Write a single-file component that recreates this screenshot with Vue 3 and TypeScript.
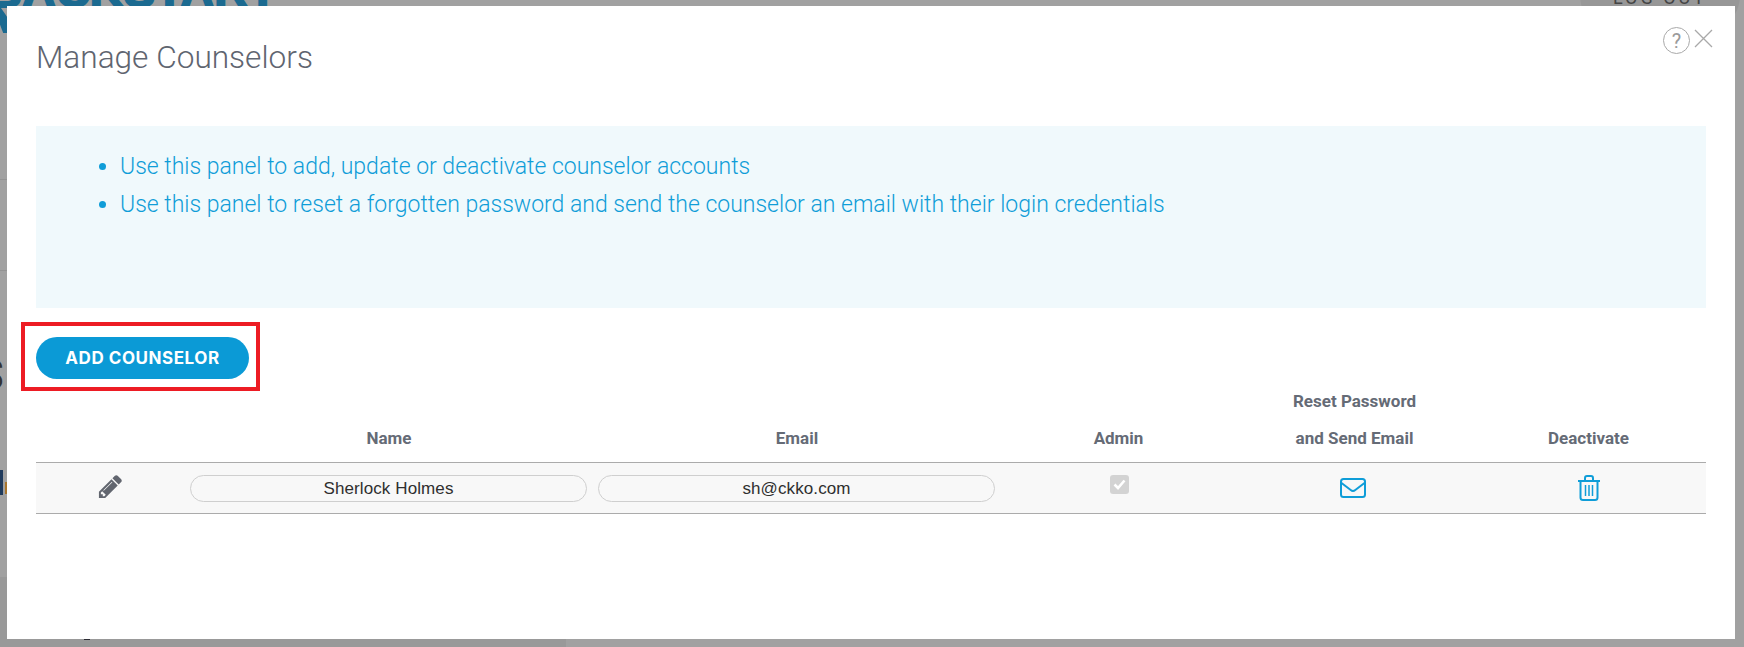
<script setup lang="ts">
interface Counselor {
  name: string;
  email: string;
}

const hints = [
  'Use this panel to add, update or deactivate counselor accounts',
  'Use this panel to reset a forgotten password and send the counselor an email with their login credentials',
];

const counselors: Counselor[] = [{ name: 'Sherlock Holmes', email: 'sh@ckko.com' }];
</script>

<template>
  <div class="page">
    <div class="backdrop">
      <div class="band" />
      <span class="logo">BACKSTART</span>
      <div class="logo-mark" />
      <div class="logout"><span>LOG OUT</span></div>
      <div class="rule rule-a" />
      <div class="rule rule-b" />
      <span class="stray-s">S</span>
      <span class="stray-bar" />
      <span class="stray-fleck" />
      <span class="stray-foot" />
    </div>

    <div class="modal">
      <header class="modal-head">
        <h1>Manage Counselors</h1>
        <div class="head-actions">
          <span class="help">?</span>
          <svg class="close" width="19" height="19" viewBox="0 0 19 19" fill="none" stroke="#a9a9a9" stroke-width="1.3">
            <path d="M1 1l17 17M18 1L1 18" />
          </svg>
        </div>
      </header>

      <section class="info">
        <ul>
          <li v-for="hint in hints" :key="hint">{{ hint }}</li>
        </ul>
      </section>

      <div class="actions">
        <button class="add-btn" type="button">ADD COUNSELOR</button>
      </div>

      <div class="table">
        <div class="row head">
          <div />
          <div>Name</div>
          <div>Email</div>
          <div>Admin</div>
          <div>Reset Password<br />and Send Email</div>
          <div>Deactivate</div>
        </div>
        <div v-for="c in counselors" :key="c.email" class="row body">
          <div class="cell">
            <svg class="pencil" width="27" height="27" viewBox="0 0 1792 1792" fill="#62666f">
              <path d="M491 1536l91-91-235-235-91 91v107h128v128h107zm523-928q0-22-22-22-10 0-17 7l-542 542q-7 7-7 17 0 22 22 22 10 0 17-7l542-542q7-7 7-17zm-54-192l416 416-832 832h-416v-416zm683 96q0 53-37 90l-166 166-416-416 166-165q36-38 90-38 53 0 91 38l235 234q37 39 37 91z" />
            </svg>
          </div>
          <div class="cell"><span class="pill">{{ c.name }}</span></div>
          <div class="cell"><span class="pill">{{ c.email }}</span></div>
          <div class="cell">
            <span class="check">
              <svg width="19" height="19" viewBox="0 0 19 19" fill="none" stroke="#fff" stroke-width="2.6">
                <path d="M4.5 9.5l3.5 3.5 6.5-7.5" />
              </svg>
            </span>
          </div>
          <div class="cell">
            <svg class="mail" width="26" height="20" viewBox="0 0 26 20" fill="none" stroke="#0f9dd8" stroke-width="2">
              <rect x="1" y="1" width="24" height="18" rx="2.5" />
              <path d="M1.5 5l9.2 7a3.6 3.6 0 0 0 4.6 0l9.2-7" />
            </svg>
          </div>
          <div class="cell">
            <svg width="24" height="26" viewBox="0 0 24 26" fill="none" stroke="#0f9dd8" stroke-width="2">
              <path d="M1 6h22" />
              <path d="M8 5.5V3.2C8 2 8.8 1 10 1h4c1.2 0 2 1 2 2.2V5.5" />
              <path d="M3.5 6v16.5c0 1.5 1 2.5 2.5 2.5h12c1.5 0 2.5-1 2.5-2.5V6" />
              <path d="M8.5 10v11M12 10v11M15.5 10v11" stroke-width="1.5" />
            </svg>
          </div>
        </div>
      </div>
    </div>
  </div>
</template>

<style scoped>
.page {
  position: relative;
  width: 1744px;
  height: 647px;
  overflow: hidden;
  background: #a1a1a1;
}

.backdrop {
  position: absolute;
  inset: 0;
}

.band {
  position: absolute;
  left: 0;
  top: 577px;
  width: 566px;
  height: 70px;
  background: #999;
}

.logo {
  position: absolute;
  left: -12px;
  top: -37px;
  font: 700 47px "Liberation Sans", sans-serif;
  -webkit-text-stroke: 2px #1b6a90;
  color: #1b6a90;
  white-space: nowrap;
}

.logo-mark {
  position: absolute;
  left: 0;
  top: 0;
  width: 8px;
  height: 33px;
  background: #1b6a90;
  clip-path: polygon(0 20%, 100% 55%, 100% 100%, 40% 100%, 0 75%);
}

.logout {
  position: absolute;
  left: 1580px;
  top: -45px;
  width: 160px;
  height: 80px;
  border-radius: 40px;
  background: #979797;
}

.logout span {
  position: absolute;
  left: 33px;
  top: 32px;
  font: 400 18px Roboto, sans-serif;
  letter-spacing: 3px;
  color: #444;
}

.rule {
  position: absolute;
  left: 0;
  width: 8px;
  height: 1px;
  background: #939393;
}

.rule-a { top: 179px; }
.rule-b { top: 270px; }

.stray-s {
  position: absolute;
  left: -24px;
  top: 348px;
  font: 700 45px Roboto, sans-serif;
  color: #333;
}

.stray-bar {
  position: absolute;
  left: 0;
  top: 470px;
  width: 3px;
  height: 25px;
  background: #1f3a5c;
}

.stray-fleck {
  position: absolute;
  left: 5px;
  top: 482px;
  width: 2px;
  height: 12px;
  background: #a8752c;
}

.stray-foot {
  position: absolute;
  left: 84px;
  top: 638px;
  width: 6px;
  height: 2px;
  background: #2b2b33;
}

.modal {
  position: absolute;
  left: 7px;
  top: 6px;
  width: 1728px;
  height: 633px;
  padding: 0 29px;
  box-sizing: border-box;
  background: #fff;
}

.modal-head {
  display: flex;
  justify-content: space-between;
  height: 120px;
}

h1 {
  margin: 0;
  padding-top: 33px;
  font: 300 31.6px/1.2 Roboto, sans-serif;
  color: #5f6570;
}

.head-actions {
  display: flex;
  align-items: flex-start;
  gap: 4px;
  padding-top: 21px;
  margin-right: -7px;
}

.help {
  display: flex;
  align-items: center;
  justify-content: center;
  box-sizing: border-box;
  width: 27px;
  height: 27px;
  border: 1.5px solid #a9a9a9;
  border-radius: 50%;
  font: 400 20px Roboto, sans-serif;
  color: #9a9a9a;
}

.close {
  margin-top: 2px;
}

.info {
  box-sizing: border-box;
  height: 182px;
  padding: 22px 0 0 51px;
  background: #f0f9fc;
}

.info ul {
  margin: 0;
  padding: 0 0 0 33px;
  list-style: disc;
}

.info li {
  font: 300 23px/38px Roboto, sans-serif;
  color: #0f9dd8;
}

.actions {
  position: relative;
  width: 213px;
  margin-top: 29px;
}

.actions::after {
  content: "";
  position: absolute;
  left: -15px;
  top: -15px;
  right: -11px;
  bottom: -12px;
  border: 4px solid #ed1c24;
  pointer-events: none;
}

.add-btn {
  display: block;
  width: 213px;
  height: 42px;
  padding: 0;
  border: 0;
  border-radius: 21px;
  background: #0b9ad6;
  font: 700 17px Inter, sans-serif;
  letter-spacing: 0.55px;
  color: #fff;
}

.table {
  margin-top: 4px;
}

.row {
  display: grid;
  grid-template-columns: 149px 408px 408px 235px 237px 231px;
}

.head {
  align-items: end;
  padding-bottom: 5px;
  text-align: center;
  font: 700 17px/37px Roboto, sans-serif;
  color: #656b76;
}

.body {
  height: 52px;
  box-sizing: border-box;
  border-top: 1.5px solid #ababab;
  border-bottom: 1.5px solid #ababab;
  background: #f8f8f8;
}

.cell {
  display: flex;
  align-items: center;
  justify-content: center;
}

.pencil {
  margin-bottom: 3px;
}

.mail {
  margin-right: 3px;
}

.pill {
  box-sizing: border-box;
  width: 397px;
  height: 27px;
  margin-right: 1px;
  border: 1px solid #cfcfcf;
  border-radius: 14px;
  text-align: center;
  font: 400 17px/25px "Liberation Sans", sans-serif;
  letter-spacing: 0.1px;
  color: #2f2f2f;
}

.check {
  display: block;
  width: 19px;
  height: 19px;
  margin-bottom: 7px;
  margin-left: 2px;
  border-radius: 3px;
  background: #d3d3d3;
}
</style>

<style>
html, body {
  margin: 0;
  background: #a1a1a1;
}
</style>
